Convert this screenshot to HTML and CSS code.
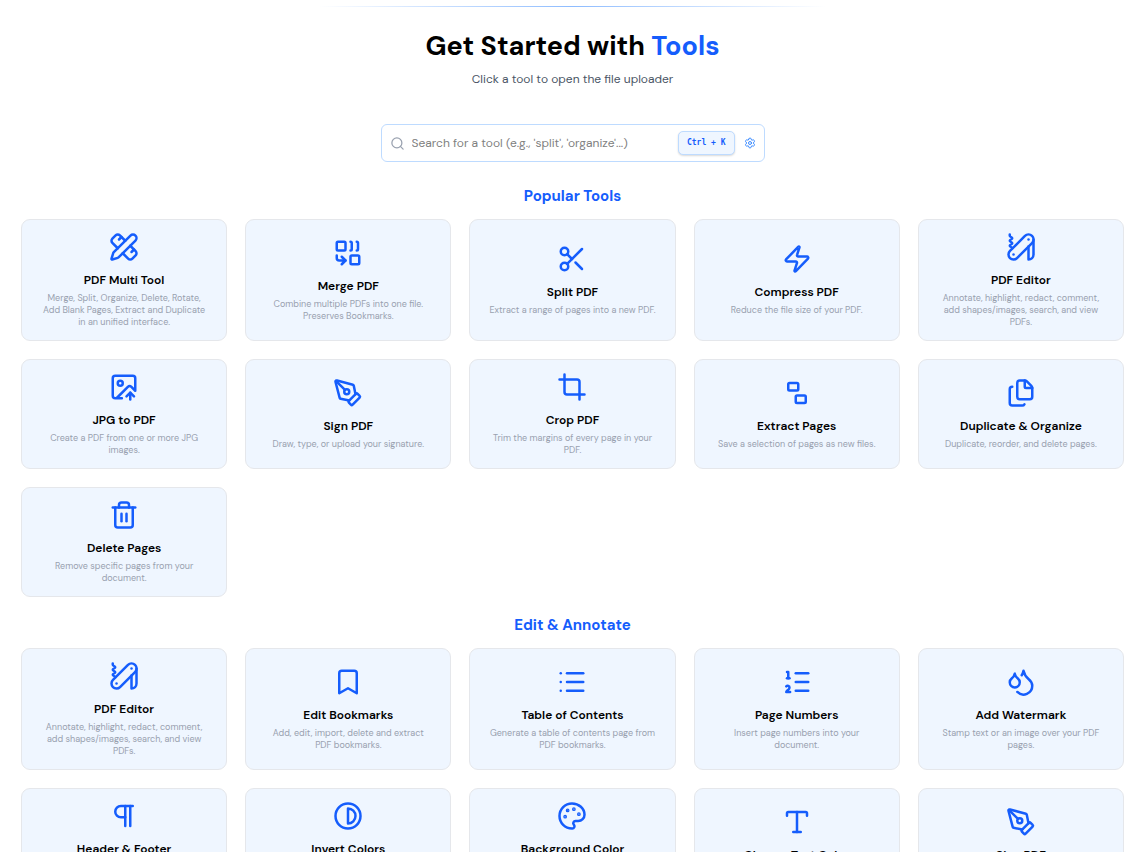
FILE: index.html
```html
<!DOCTYPE html>
<html lang="en">

<head>
    <meta charset="UTF-8">
    <meta name="viewport" content="width=device-width, initial-scale=1.0">
    <title>PDF Tools</title>
    <link rel="stylesheet" href="styles.css">
</head>

<body>
    <div class="divider"></div>

    <main class="container">
        <header class="intro">
            <h1>Get Started with <span class="accent">Tools</span></h1>
            <p>Click a tool to open the file uploader</p>
        </header>

        <div class="search">
            <svg class="search-icon" viewBox="0 0 24 24"><path d="m21 21-4.34-4.34"/><circle cx="11" cy="11" r="8"/></svg>
            <input type="text" aria-label="Search for a tool" placeholder="Search for a tool (e.g., 'split', 'organize'...)">
            <kbd>Ctrl + K</kbd>
            <button type="button" class="settings" aria-label="Settings">
                <svg viewBox="0 0 24 24"><path d="M9.671 4.136a2.34 2.34 0 0 1 4.659 0 2.34 2.34 0 0 0 3.319 1.915 2.34 2.34 0 0 1 2.33 4.033 2.34 2.34 0 0 0 0 3.831 2.34 2.34 0 0 1-2.33 4.033 2.34 2.34 0 0 0-3.319 1.915 2.34 2.34 0 0 1-4.659 0 2.34 2.34 0 0 0-3.32-1.915 2.34 2.34 0 0 1-2.33-4.033 2.34 2.34 0 0 0 0-3.831A2.34 2.34 0 0 1 6.35 6.051a2.34 2.34 0 0 0 3.319-1.915"/><circle cx="12" cy="12" r="3"/></svg>
            </button>
        </div>

        <section class="category">
            <h2>Popular Tools</h2>
            <div class="tool-grid">
                <a href="#multi-tool" class="tool-card">
                    <svg viewBox="0 0 24 24"><path d="M13 7 8.7 2.7a2.41 2.41 0 0 0-3.4 0L2.7 5.3a2.41 2.41 0 0 0 0 3.4L7 13"/><path d="m8 6 2-2"/><path d="m18 16 2-2"/><path d="m17 11 4.3 4.3c.94.94.94 2.46 0 3.4l-2.6 2.6c-.94.94-2.46.94-3.4 0L11 17"/><path d="M21.174 6.812a1 1 0 0 0-3.986-3.987L3.842 16.174a2 2 0 0 0-.5.83l-1.321 4.352a.5.5 0 0 0 .623.622l4.353-1.32a2 2 0 0 0 .83-.497z"/></svg>
                    <h3>PDF Multi Tool</h3>
                    <p>Merge, Split, Organize, Delete, Rotate, Add Blank Pages, Extract and Duplicate in an unified interface.</p>
                </a>
                <a href="#merge" class="tool-card">
                    <svg viewBox="0 0 24 24"><path d="M14 3a1 1 0 0 1 1 1v5a1 1 0 0 1-1 1"/><path d="M19 3a1 1 0 0 1 1 1v5a1 1 0 0 1-1 1"/><path d="m7 15 3 3"/><path d="m7 21 3-3H5a2 2 0 0 1-2-2v-2"/><rect x="14" y="14" width="7" height="7" rx="1"/><rect x="3" y="3" width="7" height="7" rx="1"/></svg>
                    <h3>Merge PDF</h3>
                    <p>Combine multiple PDFs into one file. Preserves Bookmarks.</p>
                </a>
                <a href="#split" class="tool-card">
                    <svg viewBox="0 0 24 24"><circle cx="6" cy="6" r="3"/><path d="M8.12 8.12 12 12"/><path d="M20 4 8.12 15.88"/><circle cx="6" cy="18" r="3"/><path d="M14.8 14.8 20 20"/></svg>
                    <h3>Split PDF</h3>
                    <p>Extract a range of pages into a new PDF.</p>
                </a>
                <a href="#compress" class="tool-card">
                    <svg viewBox="0 0 24 24"><path d="M4 14a1 1 0 0 1-.78-1.63l9.9-10.2a.5.5 0 0 1 .86.46l-1.92 6.02A1 1 0 0 0 13 10h7a1 1 0 0 1 .78 1.63l-9.9 10.2a.5.5 0 0 1-.86-.46l1.92-6.02A1 1 0 0 0 11 14z"/></svg>
                    <h3>Compress PDF</h3>
                    <p>Reduce the file size of your PDF.</p>
                </a>
                <a href="#editor" class="tool-card">
                    <svg viewBox="0 0 24 24"><path d="M3 2v1c0 1 2 1 2 2S3 6 3 7s2 1 2 2-2 1-2 2 2 1 2 2"/><path d="M18 6h.01"/><path d="M6 18h.01"/><path d="M20.83 8.83a4 4 0 0 0-5.66-5.66l-12 12a4 4 0 1 0 5.66 5.66Z"/><path d="M18 11.66V22a4 4 0 0 0 4-4V6"/></svg>
                    <h3>PDF Editor</h3>
                    <p>Annotate, highlight, redact, comment, add shapes/images, search, and view PDFs.</p>
                </a>
                <a href="#jpg-to-pdf" class="tool-card">
                    <svg viewBox="0 0 24 24"><path d="M10.3 21H5a2 2 0 0 1-2-2V5a2 2 0 0 1 2-2h14a2 2 0 0 1 2 2v10l-3.1-3.1a2 2 0 0 0-2.814.014L6 21"/><path d="m14 19.5 3-3 3 3"/><path d="M17 22v-5.5"/><circle cx="9" cy="9" r="2"/></svg>
                    <h3>JPG to PDF</h3>
                    <p>Create a PDF from one or more JPG images.</p>
                </a>
                <a href="#sign" class="tool-card">
                    <svg viewBox="0 0 24 24"><path d="M15.707 21.293a1 1 0 0 1-1.414 0l-1.586-1.586a1 1 0 0 1 0-1.414l5.586-5.586a1 1 0 0 1 1.414 0l1.586 1.586a1 1 0 0 1 0 1.414z"/><path d="m18 13-1.375-6.874a1 1 0 0 0-.746-.776L3.235 2.028a1 1 0 0 0-1.207 1.207L5.35 15.879a1 1 0 0 0 .776.746L13 18"/><path d="m2.3 2.3 7.286 7.286"/><circle cx="11" cy="11" r="2"/></svg>
                    <h3>Sign PDF</h3>
                    <p>Draw, type, or upload your signature.</p>
                </a>
                <a href="#crop" class="tool-card">
                    <svg viewBox="0 0 24 24"><path d="M6 2v14a2 2 0 0 0 2 2h14"/><path d="M18 22V8a2 2 0 0 0-2-2H2"/></svg>
                    <h3>Crop PDF</h3>
                    <p>Trim the margins of every page in your PDF.</p>
                </a>
                <a href="#extract" class="tool-card">
                    <svg viewBox="0 0 24 24"><rect x="5" y="4" width="8" height="6" rx="1"/><rect x="11" y="14" width="8" height="6" rx="1"/></svg>
                    <h3>Extract Pages</h3>
                    <p>Save a selection of pages as new files.</p>
                </a>
                <a href="#organize" class="tool-card">
                    <svg viewBox="0 0 24 24"><path d="M15 2h-4a2 2 0 0 0-2 2v11a2 2 0 0 0 2 2h8a2 2 0 0 0 2-2V8"/><path d="M16.706 2.706A2.4 2.4 0 0 0 15 2v5a1 1 0 0 0 1 1h5a2.4 2.4 0 0 0-.706-1.706z"/><path d="M5 7a2 2 0 0 0-2 2v11a2 2 0 0 0 2 2h8a2 2 0 0 0 1.732-1"/></svg>
                    <h3>Duplicate &amp; Organize</h3>
                    <p>Duplicate, reorder, and delete pages.</p>
                </a>
                <a href="#delete" class="tool-card">
                    <svg viewBox="0 0 24 24"><path d="M10 11v6"/><path d="M14 11v6"/><path d="M19 6v14a2 2 0 0 1-2 2H7a2 2 0 0 1-2-2V6"/><path d="M3 6h18"/><path d="M8 6V4a2 2 0 0 1 2-2h4a2 2 0 0 1 2 2v2"/></svg>
                    <h3>Delete Pages</h3>
                    <p>Remove specific pages from your document.</p>
                </a>
            </div>
        </section>

        <section class="category">
            <h2>Edit &amp; Annotate</h2>
            <div class="tool-grid">
                <a href="#editor" class="tool-card">
                    <svg viewBox="0 0 24 24"><path d="M3 2v1c0 1 2 1 2 2S3 6 3 7s2 1 2 2-2 1-2 2 2 1 2 2"/><path d="M18 6h.01"/><path d="M6 18h.01"/><path d="M20.83 8.83a4 4 0 0 0-5.66-5.66l-12 12a4 4 0 1 0 5.66 5.66Z"/><path d="M18 11.66V22a4 4 0 0 0 4-4V6"/></svg>
                    <h3>PDF Editor</h3>
                    <p>Annotate, highlight, redact, comment, add shapes/images, search, and view PDFs.</p>
                </a>
                <a href="#bookmarks" class="tool-card">
                    <svg viewBox="0 0 24 24"><path d="m19 21-7-4-7 4V5a2 2 0 0 1 2-2h10a2 2 0 0 1 2 2z"/></svg>
                    <h3>Edit Bookmarks</h3>
                    <p>Add, edit, import, delete and extract PDF bookmarks.</p>
                </a>
                <a href="#contents" class="tool-card">
                    <svg viewBox="0 0 24 24"><path d="M3 5h.01"/><path d="M3 12h.01"/><path d="M3 19h.01"/><path d="M8 5h13"/><path d="M8 12h13"/><path d="M8 19h13"/></svg>
                    <h3>Table of Contents</h3>
                    <p>Generate a table of contents page from PDF bookmarks.</p>
                </a>
                <a href="#page-numbers" class="tool-card">
                    <svg viewBox="0 0 24 24"><path d="M11 5h10"/><path d="M11 12h10"/><path d="M11 19h10"/><path d="M4 4h1v5"/><path d="M4 9h2"/><path d="M6.5 20H3.4c0-1 2.6-1.925 2.6-3.5a1.5 1.5 0 0 0-2.6-1.02"/></svg>
                    <h3>Page Numbers</h3>
                    <p>Insert page numbers into your document.</p>
                </a>
                <a href="#watermark" class="tool-card">
                    <svg viewBox="0 0 24 24"><path d="M7 16.3c2.2 0 4-1.83 4-4.05 0-1.16-.57-2.26-1.71-3.19S7.29 6.75 7 5.3c-.29 1.45-1.14 2.84-2.29 3.76S3 11.1 3 12.25c0 2.22 1.8 4.05 4 4.05z"/><path d="M12.56 6.6A10.97 10.97 0 0 0 14 3.02c.5 2.5 2 4.9 4 6.5s3 3.5 3 5.5a6.98 6.98 0 0 1-11.91 4.97"/></svg>
                    <h3>Add Watermark</h3>
                    <p>Stamp text or an image over your PDF pages.</p>
                </a>
                <a href="#header-footer" class="tool-card">
                    <svg viewBox="0 0 24 24"><path d="M13 4v16"/><path d="M17 4v16"/><path d="M19 4H9.5a4.5 4.5 0 0 0 0 9H13"/></svg>
                    <h3>Header &amp; Footer</h3>
                    <p>Add text to the top and bottom of every page.</p>
                </a>
                <a href="#invert" class="tool-card">
                    <svg viewBox="0 0 24 24"><circle cx="12" cy="12" r="10"/><path d="M12 18a6 6 0 0 0 0-12v12z"/></svg>
                    <h3>Invert Colors</h3>
                    <p>Create a dark mode version of your PDF document.</p>
                </a>
                <a href="#background" class="tool-card">
                    <svg viewBox="0 0 24 24"><path d="M12 22a1 1 0 0 1 0-20 10 9 0 0 1 10 9 5 5 0 0 1-5 5h-2.25a1.75 1.75 0 0 0-1.4 2.8l.3.4a1.75 1.75 0 0 1-1.4 2.8z"/><circle class="dot" cx="13.5" cy="6.5" r=".5"/><circle class="dot" cx="17.5" cy="10.5" r=".5"/><circle class="dot" cx="6.5" cy="12.5" r=".5"/><circle class="dot" cx="8.5" cy="7.5" r=".5"/></svg>
                    <h3>Background Color</h3>
                    <p>Change the background color of every page in your PDF.</p>
                </a>
                <a href="#text-color" class="tool-card">
                    <svg viewBox="0 0 24 24"><path d="M12 4v16"/><path d="M4 7V5a1 1 0 0 1 1-1h14a1 1 0 0 1 1 1v2"/><path d="M9 20h6"/></svg>
                    <h3>Change Text Color</h3>
                    <p>Change the color of text.</p>
                </a>
                <a href="#sign" class="tool-card">
                    <svg viewBox="0 0 24 24"><path d="M15.707 21.293a1 1 0 0 1-1.414 0l-1.586-1.586a1 1 0 0 1 0-1.414l5.586-5.586a1 1 0 0 1 1.414 0l1.586 1.586a1 1 0 0 1 0 1.414z"/><path d="m18 13-1.375-6.874a1 1 0 0 0-.746-.776L3.235 2.028a1 1 0 0 0-1.207 1.207L5.35 15.879a1 1 0 0 0 .776.746L13 18"/><path d="m2.3 2.3 7.286 7.286"/><circle cx="11" cy="11" r="2"/></svg>
                    <h3>Sign PDF</h3>
                    <p>Draw, type, or upload your signature.</p>
                </a>
            </div>
        </section>
    </main>
</body>

</html>
```
FILE: styles.css
```css
* {
    margin: 0;
    padding: 0;
    box-sizing: border-box;
}

body {
    padding: 6px 12px 0 21px;
    background-color: #fff;
    color: #000;
    font-family: "DM Sans", Inter, sans-serif;
}

svg {
    fill: none;
    stroke: currentColor;
    stroke-width: 2;
    stroke-linecap: round;
    stroke-linejoin: round;
}

.divider {
    width: 46%;
    height: 1px;
    margin: 0 auto 24px;
    background: linear-gradient(to right, transparent, #8ebcff, transparent);
}

.intro {
    text-align: center;
    margin-bottom: 36px;

    h1 {
        font-size: 27px;
        font-weight: 700;
        line-height: 30px;
        margin-bottom: 9px;
    }

    .accent {
        color: #155dfc;
    }

    p {
        font-size: 12px;
        line-height: 18px;
        color: #4a5565;
    }
}

.search {
    display: flex;
    align-items: center;
    max-width: 384px;
    height: 38px;
    margin: 0 auto 24px;
    padding: 0 8px;
    border: 1px solid #bedbff;
    border-radius: 6px;

    .search-icon {
        flex: none;
        width: 15px;
        height: 15px;
        margin-right: 7px;
        color: #99a1af;
    }

    input {
        flex: 1;
        min-width: 0;
        border: none;
        outline: none;
        background: none;
        color: #000;
        font-family: inherit;
        font-size: 12px;
    }

    input::placeholder {
        color: #808080;
    }

    kbd {
        padding: 0 8px;
        border: 1px solid #bedbff;
        border-radius: 5px;
        background-color: #eff6ff;
        box-shadow: 0 1px 2px rgba(0, 0, 0, 0.15);
        color: #155dfc;
        font-family: "DejaVu Sans Mono", monospace;
        font-size: 8px;
        font-weight: 700;
        line-height: 22px;
    }
}

.settings {
    display: flex;
    margin-left: 9px;
    border: none;
    background: none;
    color: #3b8bff;
    cursor: pointer;

    svg {
        width: 12px;
        height: 12px;
    }
}

.category {
    margin-bottom: 18px;

    h2 {
        margin-bottom: 12px;
        color: #155dfc;
        font-size: 15px;
        font-weight: 700;
        line-height: 21px;
        text-align: center;
    }
}

.tool-grid {
    display: grid;
    grid-template-columns: repeat(5, minmax(0, 1fr));
    gap: 18px;
}

.tool-card {
    display: flex;
    flex-direction: column;
    align-items: center;
    justify-content: center;
    padding: 12px 18px;
    border: 1px solid #e5e7eb;
    border-radius: 9px;
    background-color: #eff6ff;
    color: #000;
    text-align: center;
    text-decoration: none;

    svg {
        width: 30px;
        height: 30px;
        margin-bottom: 9px;
        color: #155dfc;
    }

    .dot {
        fill: currentColor;
    }

    h3 {
        margin-bottom: 3px;
        font-size: 12px;
        font-weight: 600;
        line-height: 18px;
    }

    p {
        color: #99a1af;
        font-size: 9px;
        line-height: 12px;
    }
}
```
